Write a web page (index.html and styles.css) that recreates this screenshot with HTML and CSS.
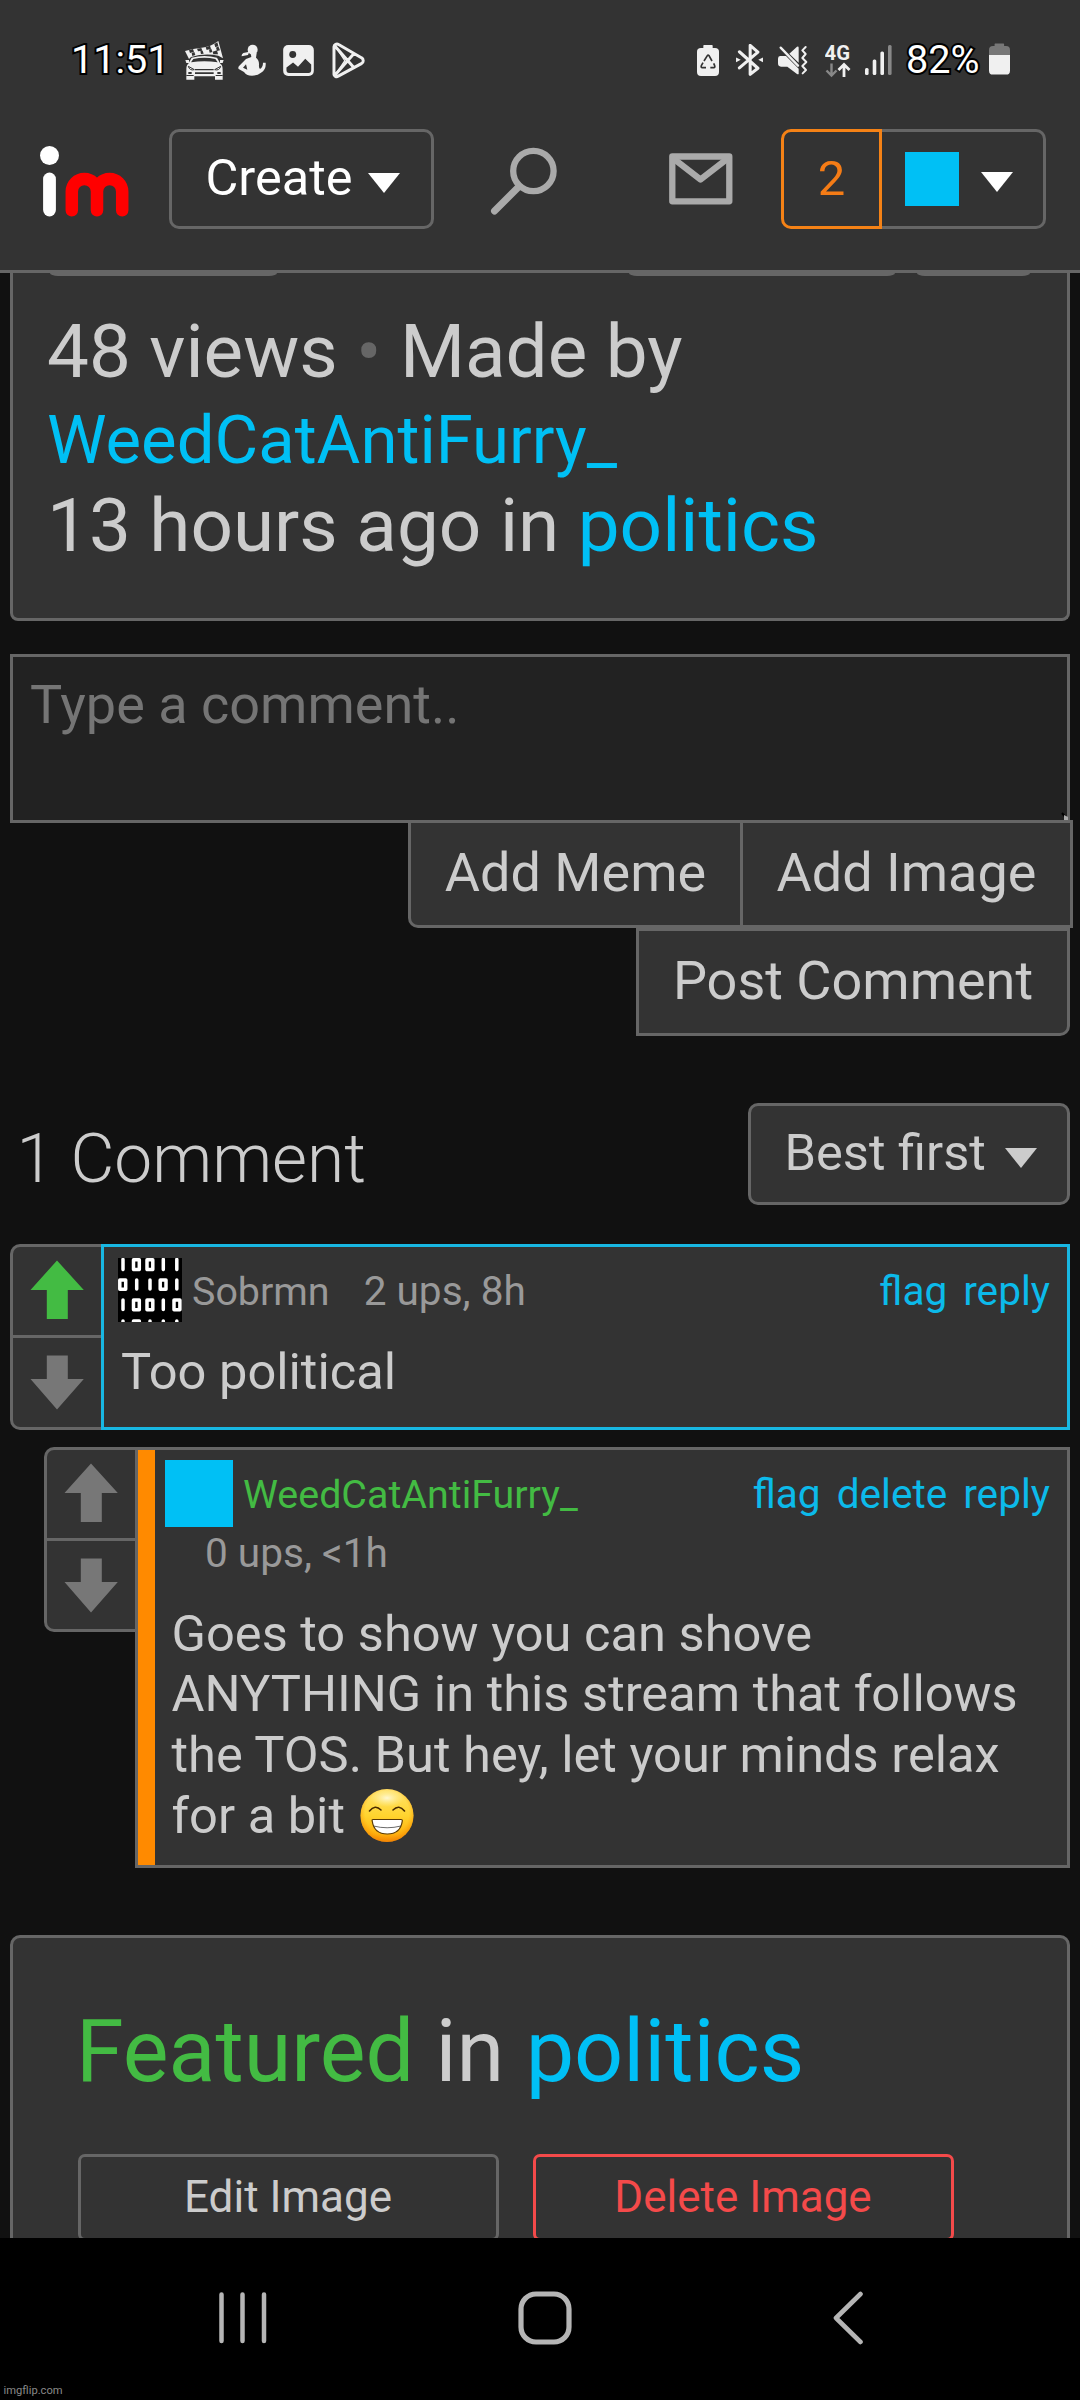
FILE: index.html
```html
<!DOCTYPE html>
<html lang="en">
<head>
<meta charset="utf-8">
<title>Imgflip</title>
<link rel="stylesheet" href="styles.css">
</head>
<body>
<svg class="defs" width="0" height="0" aria-hidden="true">
  <symbol id="arrow-up" viewBox="0 0 88 88"><path d="M44 13.500 70.800 43H54.800V72H33.800V43H17.500Z"/></symbol>
  <symbol id="arrow-down" viewBox="0 0 88 88"><path d="M44 71.500 70.800 41H54.800V17.500H33.800V41H17.500Z"/></symbol>
  <symbol id="caret" viewBox="0 0 32 20"><path d="M0 0H32L16 20Z"/></symbol>
</svg>

<header class="top">
  <div class="status">
    <span class="clock">11:51</span>
    <svg class="st-car" viewBox="46 34 117 117" width="39" height="39">
      <path fill="#f0f0f0" d="M46 64Q70 56 96 54T146 34L160 86 146 78Q104 70 64 82L58 88Z"/>
      <g fill="#333"><path d="M58 62 70 58 73 66 61 70ZM82 57 95 55 98 63 85 65ZM108 53 121 48 124 57 111 61ZM66 70 74 67 77 76 68 79ZM92 65 99 63 102 72 94 73ZM118 60 125 57 128 67 120 69ZM134 43 143 38 146 49 137 53ZM139 54 146 50 151 62 142 64ZM129 66 142 62 145 74 131 74Z"/></g>
      <path fill="#f0f0f0" d="M66 84Q104 74 142 84L152 102Q160 106 159 124V150H136V140H74V150H50V124Q49 106 56 102Z"/>
      <path fill="#f0f0f0" d="M47 91H58V100H50ZM162 91H151V100H159Z"/>
      <path fill="#333" d="M71 88Q104 80 137 88L144 98Q104 91 64 98ZM76 118H132V122H76ZM76 128H132V133H76ZM50 136H72V139H50ZM138 136H159V139H138Z"/>
      <path fill="none" stroke="#333" stroke-width="3" d="M56 110 74 120Q60 124 56 110ZM153 110 135 120Q149 124 153 110Z"/>
      <path fill="#333" d="M56 127H66V133H56ZM143 127H153V133H143Z"/>
    </svg>
    <svg class="st-person" viewBox="204 43 84 96" width="28" height="32">
      <g fill="#f0f0f0"><circle cx="248" cy="60" r="15"/><path d="M238 66 220 70Q214 74 215 80L234 76ZM242 70H260L258 84Q268 92 267 106Q266 114 270 118Q279 112 279 99L287 99Q289 120 273 129Q262 138 246 138Q228 138 222 127L206 118Q203 113 208 108L228 88 244 82Z"/></g>
      <path fill="#333" d="M228 104 219 114 232 120Z"/>
    </svg>
    <svg class="st-image" viewBox="339 44 93 94" width="31" height="31">
      <rect x="339" y="44" width="93" height="94" rx="15" fill="#f0f0f0"/>
      <circle cx="368" cy="73" r="10.500" fill="#333"/>
      <path fill="#333" d="M349 112 369 97 384 110 406 86 424 103V120Q424 129 416 129H357Q349 129 349 120Z"/>
    </svg>
    <svg class="st-play" viewBox="485 36 100 111" width="33" height="37">
      <path fill="none" stroke="#f0f0f0" stroke-width="9" stroke-linejoin="round" stroke-linecap="round" d="M491 50V132a8 8 0 0 0 13 7L574 101a10 10 0 0 0 0-18L505 43a9 9 0 0 0-14 7ZM493 47 551 113M493 137 551 71"/>
      <path fill="none" stroke="#f0f0f0" stroke-width="4" d="M497 52 524 92 497 132"/>
    </svg>

    <svg class="st-recycle" viewBox="51 44 66 93" width="22" height="31">
      <path fill="#f0f0f0" d="M70 46Q70 44 72 44H96Q98 44 98 46V53H105Q117 53 117 64V125Q117 137 105 137H63Q51 137 51 125V64Q51 53 63 53H70Z"/>
      <path fill="none" stroke="#333" stroke-width="5" stroke-linejoin="round" d="M72 92 82 76Q84 73 87 76L96 92M101 99 104 106Q106 112 101 112H91M78 112H67Q62 112 64 106L69 97"/>
    </svg>
    <svg class="st-bt" viewBox="167 43 80 95" width="27" height="32">
      <path fill="none" stroke="#f0f0f0" stroke-width="9" stroke-linejoin="round" stroke-linecap="round" d="M177 66 232 115 209 133V47L232 67 177 114"/>
      <path fill="#f0f0f0" d="M167 83 181 90 167 97ZM247 83 233 90 247 97Z"/>
    </svg>
    <svg class="st-mute" viewBox="294 44 90 90" width="30" height="30">
      <path fill="#f0f0f0" d="M300 77H318L356 115V131Q354 133 351 131L322 109H303Q294 109 294 99V85Q294 77 300 77ZM328 70 351 49Q356 47 356 52V97Z"/>
      <path fill="none" stroke="#f0f0f0" stroke-width="7" stroke-linecap="round" d="M302 52 354 106"/>
      <path fill="none" stroke="#f0f0f0" stroke-width="6" stroke-linecap="round" stroke-linejoin="round" d="M377 50 367 60 377 71 367 83 379 95 367 107 378 119 368 129"/>
    </svg>
    <svg class="st-4g" viewBox="0 0 26 34" width="26" height="34">
      <text x="-.5" y="15.500" class="net" textLength="25.500" lengthAdjust="spacingAndGlyphs">4G</text>
      <path fill="none" stroke="#888" stroke-width="2.400" d="M6.500 19.500V31M1.500 26.500 6.500 31.500 11.500 26.500"/>
      <path fill="none" stroke="#f0f0f0" stroke-width="2.800" d="M19 33V21M13.500 26 19 20.500 24.500 26"/>
    </svg>
    <svg class="st-signal" viewBox="0 0 27 31" width="27" height="31">
      <g fill="#f0f0f0"><rect x="0" y="24" width="3.600" height="7" rx="1.500"/><rect x="7.700" y="15.500" width="3.600" height="15.500" rx="1.500"/><rect x="15.400" y="7.500" width="3.600" height="23.500" rx="1.500"/></g>
      <rect x="23" y="1" width="3.600" height="30" rx="1.500" fill="#888"/>
    </svg>
    <span class="percent">82%</span>
    <svg class="st-battery" viewBox="926 40 64 95" width="21" height="32">
      <path fill="#777" d="M943 42Q943 40 945 40H970Q972 40 972 42V48H978Q990 48 990 60V78H926V60Q926 48 938 48H943Z"/>
      <path fill="#f0f0f0" d="M926 75H990V123Q990 135 978 135H938Q926 135 926 123Z"/>
    </svg>
  </div>

  <div class="bar">
    <svg class="logo" viewBox="0 0 90 72" width="90" height="72">
      <circle cx="9.500" cy="9.500" r="9.500" fill="#fff"/>
      <path fill="none" stroke="#fff" stroke-width="12.800" stroke-linecap="round" d="M9.500 33V64"/>
      <path fill="none" stroke="#f00" stroke-width="12.500" stroke-linecap="round" stroke-linejoin="round" d="M31.800 64.300V45.500a12.600 12.600 0 0 1 25.200 0V64.300M57 64.300V45.500a12.600 12.600 0 0 1 25.200 0V64.300"/>
    </svg>
    <button class="create">Create<svg class="caret" width="32" height="20"><use href="#caret"/></svg></button>
    <svg class="search" viewBox="0 0 68 70" width="68" height="70">
      <g fill="none" stroke="#aaa" stroke-width="6.300" stroke-linecap="round"><circle cx="43.400" cy="25" r="20.200"/><path stroke-width="7" d="M28.500 41 4.500 65"/></g>
    </svg>
    <svg class="mail" viewBox="0 0 64 52" width="64" height="52">
      <g fill="none" stroke="#aaa" stroke-width="6.300" stroke-linejoin="round"><rect x="3.300" y="3.500" width="57" height="44.800"/><path d="M5 6 31.500 26.500 58 6"/></g>
    </svg>
    <div class="account">
      <span class="count">2</span>
      <span class="me"><i class="me-avatar"></i><svg class="caret" width="32" height="20"><use href="#caret"/></svg></span>
    </div>
  </div>
</header>

<main class="page">
  <section class="info">
    <div class="tabs"><i class="tab tab-a"></i><i class="tab tab-b"></i><i class="tab tab-c"></i></div>
    <p class="line one">48 views <span class="bullet">•</span> Made by</p>
    <p class="line two"><a>WeedCatAntiFurry_</a></p>
    <p class="line three">13 hours ago in <a>politics</a></p>
  </section>

  <section class="compose">
    <textarea class="field" placeholder="Type a comment.."></textarea>
    <svg class="grip" viewBox="0 0 7 8" width="7" height="8"><path d="M1 1 6 7" stroke="#000" stroke-width="2"/><path d="M3 3 7 5V8H3Z" fill="#aaa"/></svg>
    <div class="add-row"><button class="add meme">Add Meme</button><button class="add image">Add Image</button></div>
    <button class="post">Post Comment</button>
  </section>

  <div class="thread-head">
    <h2 class="thread-title">1 Comment</h2>
    <button class="sort">Best first<svg class="caret" width="32" height="20"><use href="#caret"/></svg></button>
  </div>

  <article class="comment">
    <div class="votes">
      <svg class="vote voted" width="88" height="88"><use href="#arrow-up"/></svg>
      <svg class="vote down" width="88" height="88"><use href="#arrow-down"/></svg>
    </div>
    <div class="box active">
      <div class="head">
        <svg class="avatar" viewBox="0 0 64 64" width="64" height="64">
          <rect width="64" height="64" fill="#000"/>
          <g fill="none" stroke="#fff" stroke-width="3.500" stroke-linecap="round" stroke-linejoin="round">
            <path d="M5 1.500V11.500M45.300 1.500V11.500M58.800 1.500V11.500M18.700 22V31M32 22V31M58.800 22V31M5 42V51.500M45.300 42V51.500M5 63V66M32 63V66M45.300 63V66M58.800 63V66"/>
            <path d="M15.500 1.800H21.300V11.500H15.500ZM29 1.800H34.800V11.500H29ZM1.800 22H7.700V31.200H1.800ZM42.200 22H48V31.200H42.200ZM15.500 42H21.300V51.700H15.500ZM29 42H34.800V51.700H29ZM56 42H61.900V51.700H56ZM15.500 63H21.300V70H15.500Z"/>
          </g>
        </svg>
        <span class="name">Sobrmn</span>
        <span class="meta">2 ups, 8h</span>
        <nav class="links"><a>flag</a><a>reply</a></nav>
      </div>
      <p class="text">Too political</p>
    </div>
  </article>

  <article class="comment reply">
    <div class="votes">
      <svg class="vote" width="88" height="88"><use href="#arrow-up"/></svg>
      <svg class="vote down" width="88" height="88"><use href="#arrow-down"/></svg>
    </div>
    <div class="box own">
      <div class="head">
        <i class="avatar solid"></i>
        <span class="name author">WeedCatAntiFurry_</span>
        <nav class="links"><a>flag</a><a>delete</a><a>reply</a></nav>
      </div>
      <div class="meta">0 ups, &lt;1h</div>
      <p class="text">Goes to show you can shove<br>ANYTHING in this stream that follows<br>the TOS. But hey, let your minds relax<br>for a bit <svg class="emoji" role="img" aria-label="😁" viewBox="0 0 54 55" width="54" height="55">
        <defs>
          <linearGradient id="skin" x1="0" y1="0" x2="0" y2="1"><stop offset="0" stop-color="#ffe36e"/><stop offset=".5" stop-color="#ffd42f"/><stop offset=".85" stop-color="#ffb310"/><stop offset="1" stop-color="#f58a08"/></linearGradient>
          <radialGradient id="rim" cx=".5" cy=".45" r=".55"><stop offset=".75" stop-color="#f90" stop-opacity="0"/><stop offset="1" stop-color="#f08000" stop-opacity=".6"/></radialGradient>
          <radialGradient id="shine"><stop offset="0" stop-color="#fffbe0" stop-opacity=".9"/><stop offset="1" stop-color="#fff3a0" stop-opacity="0"/></radialGradient>
        </defs>
        <circle cx="27" cy="27.500" r="26.500" fill="url(#skin)"/><circle cx="27" cy="27.500" r="26.500" fill="url(#rim)"/>
        <ellipse cx="27" cy="10" rx="17" ry="9" fill="url(#shine)"/>
        <path d="M9.500 23Q15 16 21 22M33 22Q39 16 44.500 23" fill="none" stroke="#4a2c00" stroke-width="1.600" stroke-linecap="round"/>
        <path d="M13 31.500H41Q42.500 31.500 42.300 33Q40.500 46 27.300 46T12.200 33Q11.800 31.500 13 31.500Z" fill="#fff" stroke="#5a3a05" stroke-width="1.200"/>
        <path d="M13.500 38Q27 41.500 41 38" fill="none" stroke="#444" stroke-width=".8"/>
      </svg></p>
    </div>
  </article>

  <section class="featured">
    <h2 class="featured-title"><span class="green">Featured</span> in <a>politics</a></h2>
    <div class="actions"><button class="action">Edit Image</button><button class="action danger">Delete Image</button></div>
  </section>
</main>

<footer class="nav">
  <svg class="recents" viewBox="0 0 48 52" width="48" height="52"><path d="M2.500 2.500V49M23.500 2.500V49M45 2.500V49" fill="none" stroke="#b5b5b5" stroke-width="4.500" stroke-linecap="round"/></svg>
  <svg class="home" viewBox="0 0 54 54" width="54" height="54"><rect x="3" y="3" width="48" height="48" rx="15" fill="none" stroke="#b5b5b5" stroke-width="5.200"/></svg>
  <svg class="back" viewBox="0 0 32 54" width="32" height="54"><path d="M28.500 3 4 27 28.500 51" fill="none" stroke="#b5b5b5" stroke-width="4.600" stroke-linecap="round" stroke-linejoin="round"/></svg>
  <span class="watermark">imgflip.com</span>
</footer>
</body>
</html>
```
FILE: styles.css
```css
* { box-sizing: border-box; }
body {
  margin: 0;
  width: 1080px;
  height: 2400px;
  display: flex;
  flex-direction: column;
  overflow: hidden;
  background: #111;
  color: #ccc;
  font-family: Roboto, "Liberation Sans", sans-serif;
}
.defs { position: absolute; }
svg { display: block; flex: none; overflow: hidden; }
p, h2 { margin: 0; font-weight: 400; }
a { color: #00c0f5; }
button {
  margin: 0;
  padding: 0;
  font: inherit;
  color: #ccc;
  background: #333;
  border: 3px solid #666;
}
.caret { fill: currentColor; }

/* status bar and site header */
.top { flex: none; height: 273px; background: #333; border-bottom: 3px solid #666; }
.status { height: 118px; display: flex; align-items: center; padding-left: 71px; }
.clock, .percent { color: #fff; -webkit-text-stroke: 4px #000; paint-order: stroke fill; white-space: pre; padding-top: 2px; }
.clock { width: 99px; font-size: 39.6px; line-height: 48px; }
.percent { width: 74px; margin-left: 14.5px; font-size: 39.6px; line-height: 48px; }
.st-car { margin: 3px 0 0 15px; }
.st-person { margin: 2px 0 0 14px; }
.st-image { margin: 3px 0 0 17px; }
.st-play { margin: 3px 0 0 18px; }
.st-recycle { margin: 3px 0 0 332px; }
.st-bt { margin: 2px 0 0 16.5px; }
.st-mute { margin: 2px 0 0 15.5px; }
.st-4g { margin: 4px 0 0 17px; }
.st-signal { margin: 1px 0 0 13.5px; }
.st-battery { margin-left: 8.5px; }
.net { font-size: 19.5px; font-weight: 700; fill: #f0f0f0; }

.bar { height: 122px; display: flex; align-items: center; padding-left: 40px; }
.logo { margin-top: 6px; }
.create {
  width: 265px; height: 100px; margin-left: 39px; padding: 0 0 3px 33.5px;
  display: flex; align-items: center; gap: 15px;
  border-radius: 10px; font-size: 50.5px; color: #fff;
}
.create .caret { margin-top: 10px; }
.search { margin: 4px 0 0 56px; }
.mail { margin-left: 111px; }
.account { display: flex; margin-left: 48px; height: 100px; }
.count {
  width: 101px; padding-bottom: 2px;
  display: flex; align-items: center; justify-content: center;
  border: 3px solid #f58216; border-radius: 10px 0 0 10px; color: #f57c16; font-size: 49px;
}
.me {
  width: 164px; display: flex; align-items: center; gap: 22px; padding-left: 23px;
  border: solid #666; border-width: 3px 3px 3px 0; border-radius: 0 10px 10px 0; color: #fff;
}
.me-avatar { width: 54px; height: 54px; background: #00c0f5; }
.me .caret { margin-top: 6px; }

/* page */
.page { height: 1965px; overflow: hidden; padding: 0 10px; display: flex; flex-direction: column; }
.info {
  flex: none; height: 348px; padding: 0 34px;
  background: #333; border: solid #666; border-width: 0 3px 3px; border-radius: 0 0 8px 8px;
}
.tabs { display: flex; height: 3px; margin-bottom: 32px; padding-left: 3px; }
.tab { height: 3px; background: #666; border-radius: 0 0 8px 8px / 0 0 3px 3px; }
.tab-a { width: 227px; }
.tab-b { width: 266px; margin-left: 352px; }
.tab-c { width: 113px; margin-left: 22px; }
.line { white-space: nowrap; font-size: 74.6px; }
.one { line-height: 87px; }
.two { line-height: 91px; font-size: 67.1px; }
.three { line-height: 79px; }
.bullet { color: #666; }

.compose { flex: none; position: relative; margin-top: 33px; display: flex; flex-direction: column; align-items: flex-end; }
.field {
  display: block; width: 1060px; height: 169px; margin: 0; padding: 16px 17px;
  background: #222; border: 3px solid #666; border-radius: 0; resize: none; overflow: hidden;
  font: 54px/63px Roboto, "Liberation Sans", sans-serif; color: #ccc;
}
.field::placeholder { color: #757575; opacity: 1; }
.grip { position: absolute; right: 2px; top: 158px; }
.add-row { display: flex; margin: -3px -3px 0 0; }
.add { height: 108px; padding-bottom: 3px; font-size: 54px; }
.meme { width: 332px; border-right: 0; border-radius: 0 0 0 10px; }
.image { width: 333px; }
.post { width: 434px; height: 108px; padding: 0 0 3px; border-radius: 0 0 10px 0; font-size: 54px; }

.thread-head { flex: none; display: flex; justify-content: space-between; margin-top: 67px; height: 102px; padding-left: 6.5px; }
.thread-title { font-size: 67.6px; font-weight: 300; line-height: 112px; }
.sort {
  width: 322px; height: 102px; padding: 0 0 3px 33.5px; display: flex; align-items: center; gap: 19px;
  border-radius: 10px; font-size: 50.6px;
}
.sort .caret { margin-top: 10px; }

.comment { flex: none; display: flex; align-items: flex-start; margin-top: 39px; }
.votes {
  width: 91px; background: #333; border: solid #666; border-width: 3px 0 3px 3px; border-radius: 10px 0 0 10px;
}
.vote { fill: #777; }
.voted { fill: #43bb43; }
.down { box-sizing: content-box; border-top: 3px solid #666; }
.comment .votes { height: 186px; }
.box { flex: 1; height: 186px; background: #333; border: 3px solid #666; padding: 11px 0 0 14px; }
.active { border-color: #18b7e2; }
.head { display: flex; height: 64px; padding-right: 17px; }
.name, .head .meta, .links { line-height: 66px; white-space: nowrap; }
.name { margin-left: 10px; font-size: 39.4px; color: #999; padding-top: 1px; }
.meta { font-size: 40.6px; color: #999; }
.head .meta { margin-left: 34px; }
.links { margin-left: auto; display: flex; gap: 16px; font-size: 40.6px; }
.links a { color: #0cbaea; }
.text { margin: 20px 0 0 3px; font-size: 50.6px; line-height: 60.8px; white-space: nowrap; }

.reply { margin: 17px 0 0 34px; }
.reply .votes { height: 185px; }
.own { height: 421px; padding: 10px 0 0 27px; background: linear-gradient(90deg, #ff8a00 17px, #333 17px); }
.solid { width: 68px; height: 67px; background: #00c0f5; }
.own .head { height: 67px; }
.author { color: #43bb43; }
.own .name, .own .links { line-height: 68px; }
.own > .meta { margin: 2px 0 0 40px; line-height: 48px; }
.own .text { margin: 26.5px 0 0 6.5px; }
.emoji { display: inline-block; vertical-align: -10px; margin-left: 2px; }

.featured {
  flex: none; height: 400px; margin-top: 67px; padding-left: 63px;
  background: #333; border: 3px solid #666; border-radius: 10px;
}
.featured-title { font-size: 86.3px; line-height: 100px; padding-top: 64px; white-space: nowrap; }
.green { color: #43bb43; }
.actions { display: flex; gap: 34px; margin: 52px 0 0 1.5px; }
.action { width: 421px; height: 87px; border-radius: 7px; font-size: 44px; padding-bottom: 1px; }
.danger { border-color: #f44a4a; color: #f44a4a; }

/* system navigation */
.nav { flex: none; position: relative; height: 162px; display: flex; align-items: center; background: #000; padding: 0 0 2px 219px; }
.home { margin-left: 251px; }
.back { margin-left: 259.5px; }
.watermark { position: absolute; left: 3.5px; bottom: 2px; font-size: 11.2px; line-height: 14px; color: #888; }
```
